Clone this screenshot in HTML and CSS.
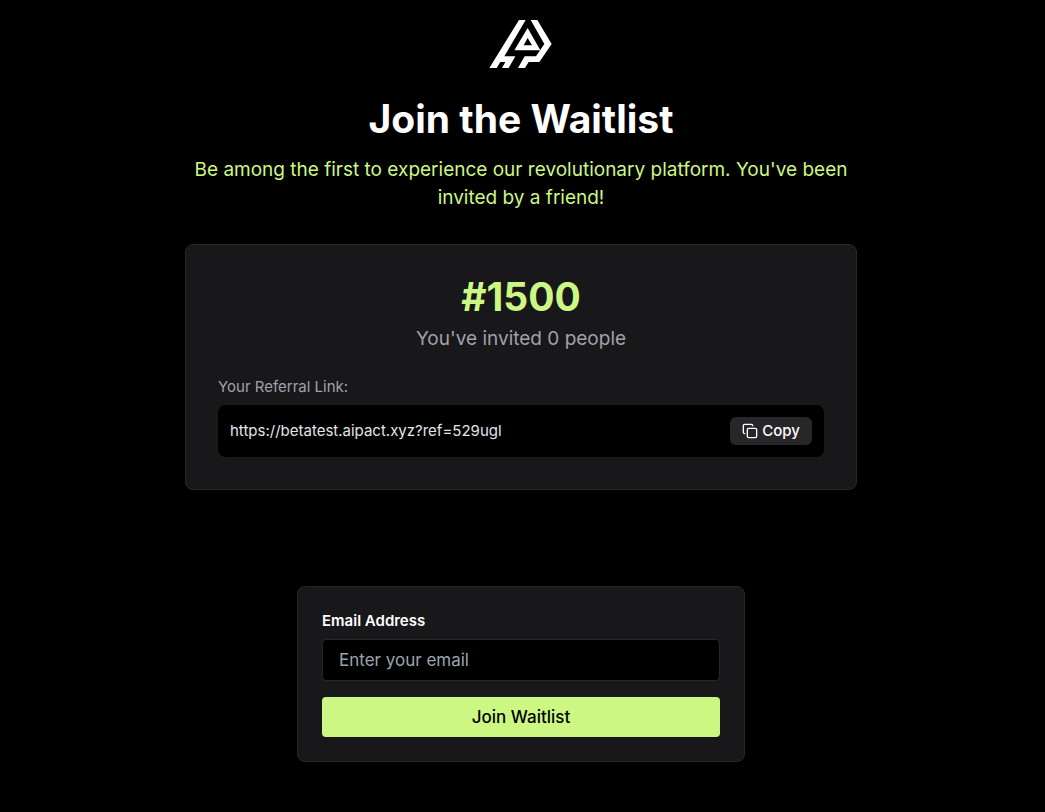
FILE: index.html
```html
<!DOCTYPE html>
<html lang="en">
<head>
<meta charset="utf-8">
<meta name="viewport" content="width=device-width, initial-scale=1">
<title>Join the Waitlist</title>
<link rel="stylesheet" href="styles.css">
</head>
<body>
<main class="page">
  <header class="hero">
    <svg class="logo" viewBox="30 30 189 144" role="img" aria-label="Logo" fill="#fff">
      <path d="M117 30H137L73 139H106L86 174H66L76 156H61L50 174H28Z"/>
      <path d="M152 30H172L215 102L178 156H146L135 174H114L134 139H168L193 102Z"/>
      <path fill-rule="evenodd" d="M143 54L181 121H103ZM143 84L131 106H156Z"/>
    </svg>
    <h1 class="title">Join the Waitlist</h1>
    <p class="subtitle">Be among the first to experience our revolutionary platform. You've been invited by a friend!</p>
  </header>
  <section class="card referral">
    <p class="rank">#1500</p>
    <p class="invited">You've invited 0 people</p>
    <p class="link-label">Your Referral Link:</p>
    <div class="link-box">
      <span class="link-url">https://betatest.aipact.xyz?ref=529ugl</span>
      <button class="copy" type="button">
        <svg class="copy-icon" viewBox="0 0 24 24" fill="none" stroke="currentColor" stroke-width="2" stroke-linecap="round" stroke-linejoin="round" aria-hidden="true">
          <rect x="8" y="8" width="14" height="14" rx="2"/>
          <path d="M4 16c-1.100 0-2-.9-2-2V4c0-1.100.9-2 2-2h10c1.100 0 2 .9 2 2"/>
        </svg>
        Copy
      </button>
    </div>
  </section>
  <form class="card signup">
    <label class="email-label" for="email">Email Address</label>
    <input class="email" id="email" type="email" placeholder="Enter your email">
    <button class="join" type="submit">Join Waitlist</button>
  </form>
</main>
</body>
</html>
```
FILE: styles.css
```css
* { box-sizing: border-box; }
body {
  margin: 0;
  background: #000;
  color: #fff;
  font-family: Inter, "Liberation Sans", sans-serif;
}
h1, p { margin: 0; }
button, input { font: inherit; }
.page {
  display: flex;
  flex-direction: column;
  align-items: center;
  padding: 20px 19px 48px 16px;
}
.hero {
  display: flex;
  flex-direction: column;
  align-items: center;
  width: 100%;
  max-width: 672px;
  margin-bottom: 32px;
  text-align: center;
}
.logo { width: 63px; height: 48px; margin-bottom: 31px; overflow: visible; }
.title {
  margin-bottom: 17px;
  font-size: 39px;
  line-height: 40px;
  font-weight: 700;
}
.subtitle { color: #cdf783; font-size: 19px; line-height: 28px; }
.card {
  width: 100%;
  background: #18181a;
  border: 1px solid #27272a;
  border-radius: 8px;
}
.referral { max-width: 672px; padding: 32px; margin-bottom: 96px; }
.rank {
  margin-bottom: 8px;
  color: #cdf783;
  font-size: 39px;
  line-height: 40px;
  font-weight: 700;
  text-align: center;
}
.invited {
  margin-bottom: 24px;
  color: #a1a1aa;
  font-size: 19px;
  line-height: 28px;
  text-align: center;
}
.link-label { margin-bottom: 8px; color: #a1a1aa; font-size: 15px; line-height: 20px; }
.link-box {
  display: flex;
  align-items: center;
  justify-content: space-between;
  gap: 12px;
  padding: 12px;
  background: #000;
  border-radius: 8px;
}
.link-url {
  min-width: 0;
  color: #e4e4e7;
  font-size: 15px;
  line-height: 20px;
  overflow-wrap: anywhere;
}
.copy {
  display: flex;
  align-items: center;
  gap: 4px;
  padding: 4px 12px;
  background: #27272a;
  color: #fff;
  border: 0;
  border-radius: 6px;
  font-size: 15px;
  line-height: 20px;
  font-weight: 500;
}
.copy-icon { width: 16px; height: 16px; }
.signup { display: flex; flex-direction: column; max-width: 448px; padding: 24px; }
.email-label { margin-bottom: 8px; font-size: 15px; line-height: 20px; font-weight: 600; }
.email {
  width: 100%;
  margin-bottom: 16px;
  padding: 8px 16px;
  background: #000;
  color: #fff;
  border: 1px solid #27272a;
  border-radius: 4px;
  font-size: 17px;
  line-height: 24px;
}
.email::placeholder { color: #9ca3af; opacity: 1; }
.join {
  padding: 8px 16px;
  background: #cdf783;
  color: #000;
  border: 0;
  border-radius: 4px;
  font-size: 17px;
  line-height: 24px;
  font-weight: 500;
}
```
